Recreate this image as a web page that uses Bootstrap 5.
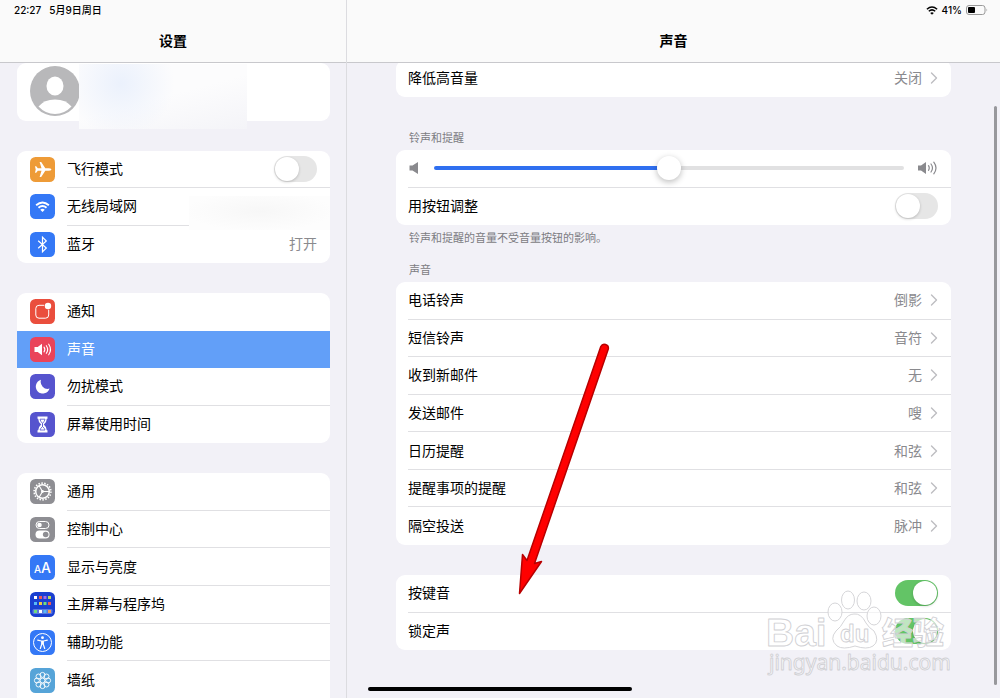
<!DOCTYPE html>
<html lang="zh-CN">
<head>
<meta charset="utf-8">
<meta name="viewport" content="width=device-width, initial-scale=1">
<title>设置 - 声音</title>
<link href="https://cdn.jsdelivr.net/npm/bootstrap@5.3.0/dist/css/bootstrap.min.css" rel="stylesheet">
<style>
  body { background: #f2f1f7; color: #000; font: 14px/20px Inter, "Noto Sans CJK SC", sans-serif; }
  a { color: inherit; text-decoration: none; }
  .sidebar { width: 347px; border-right: 1px solid #dcdce0; }
  .pane-head { height: 63px; background: #fafafa; border-bottom: 1px solid #c8c8cc; }
  .status { height: 20px; font-size: 10px; line-height: 20px; font-weight: 500; padding: 0 12px 0 14px; }
  .pane-title { font-size: 14px; line-height: 20px; font-weight: 600; padding-top: 11px; text-align: center; margin: 0; }
  .side-body { padding: 0 16px 0 17px; }
  .detail-body { padding: 0 49px; margin-top: -3px; }
  .clip { min-height: 0; }
  .group { background: #fff; border-radius: 9px; margin-bottom: 30px; display: flex; flex-direction: column; overflow: hidden; }
  .group.rows-2 { min-height: 75px; }
  .group.rows-3 { min-height: 112px; }
  .group.rows-4 { min-height: 150px; }
  .group.rows-6 { min-height: 226px; border-radius: 9px 9px 0 0; margin: 0; }
  .group.rows-7 { min-height: 263px; }
  .item { flex: 1 1 0; display: flex; align-items: stretch; padding-left: 12px; }
  .side-body .item { padding-left: 13px; gap: 12px; }
  .item-main { flex: 1; display: flex; align-items: center; justify-content: space-between; padding-right: 13px; border-bottom: 1px solid #e0e0e3; }
  .item:last-child .item-main, .no-line .item-main { border-color: transparent; }
  .rows-6 .item:last-child .item-main { border-color: #e0e0e3; }
  .item.current { background: #629ff8; color: #fff; }
  .value { color: #8a8a8e; }
  .glyph { width: 25px; height: 25px; align-self: center; flex: none; }
  .caption { color: #7c7c82; font-size: 11px; line-height: 16px; padding: 0 13px 4px; margin: 0; font-weight: 400; }
  .caption.first { padding-top: 33px; }
  .caption.note { padding-top: 5px; margin-bottom: 12px; }
  .chev { width: 8px; height: 12px; margin-left: 8px; }
  .switch { appearance: none; width: 43px; height: 26px; margin: 0; border-radius: 13px; background: #e6e6e6; position: relative; flex: none; display: block; }
  .switch::before { content: ""; position: absolute; left: 1px; top: 1px; width: 24px; height: 24px; border-radius: 50%; background: #fff; box-shadow: 0 1px 3px #0003; }
  .switch:checked { background: #63c466; }
  .switch:checked::before { left: 18px; }
  .volume { appearance: none; height: 26px; margin: 0 13px; background: none; min-width: 0; }
  .volume::-webkit-slider-runnable-track { height: 4px; border-radius: 2px; background: linear-gradient(90deg, #2f6ff0 50%, #e1e1e2 50%); }
  .volume::-webkit-slider-thumb { appearance: none; width: 24px; height: 24px; margin-top: -10px; border-radius: 50%; background: #fff; box-shadow: 0 2px 6px #0004; }
  .profile { min-height: 58px; padding: 3px 13px; overflow: visible; position: relative; }
  .smudge-name { position: absolute; left: 62px; top: 1px; width: 168px; height: 65px; background: radial-gradient(circle at 25% 30%, #ebf1fc 0, #f7f8fc00 40%), linear-gradient(165deg, #fcfcfd 50%, #f4f4f8); }
  .smudge-net { position: absolute; right: 0; top: 8px; width: 141px; height: 34px; z-index: 1; background: radial-gradient(ellipse at 50% 45%, #f7f7f7, #fdfdfd 75%); }
  .arrow { position: absolute; left: 166px; top: 340px; pointer-events: none; }
  .watermark { position: absolute; right: 50px; bottom: 18px; pointer-events: none; }
  .home-bar { position: absolute; left: 50%; bottom: 7px; width: 264px; margin-left: -132px; height: 4px; border-radius: 2px; background: #000; }
  .scroll-thumb { position: absolute; right: 3px; top: 106px; bottom: 13px; width: 3px; border-radius: 2px; background: #98989c; }
</style>
</head>
<body>
<svg class="d-none">
  <symbol id="chev" viewBox="0 0 8 12"><path d="M1.500 1L6.500 6L1.500 11" fill="none" stroke="#bdbdc1" stroke-width="1.400" stroke-linecap="round" stroke-linejoin="round"/></symbol>
  <symbol id="wifi" viewBox="0 0 16 12"><g fill="none" stroke="currentColor" stroke-width="2"><path d="M1.200 4.400Q8-1.600 14.800 4.400"/><path d="M3.700 7Q8 3.300 12.300 7"/></g><path d="M8 11.600L5.600 9.200Q8 7.300 10.400 9.200Z" fill="currentColor"/></symbol>
</svg>
<div class="d-flex vh-100 overflow-hidden position-relative">
  <aside class="sidebar d-flex flex-column flex-shrink-0">
    <header class="pane-head flex-shrink-0">
      <div class="status d-flex"><span>22:27</span><span class="ms-2">5月9日周日</span></div>
      <h1 class="pane-title">设置</h1>
    </header>
    <div class="clip flex-fill overflow-hidden">
    <nav class="side-body">
      <div class="group profile">
        <svg width="50" height="50" viewBox="0 0 50 50"><circle cx="25" cy="25" r="25" fill="#b8b8ba"/><ellipse cx="25" cy="20" rx="8.500" ry="9.500" fill="#fff"/><path d="M8.500 40.500Q14 33.500 25 33.500T41.500 40.500Q34.500 48 25 48T8.500 40.500Z" fill="#fff"/></svg>
        <div class="smudge-name"></div>
      </div>
      <div class="group rows-3">
        <div class="item">
          <svg class="glyph" viewBox="0 0 25 25"><rect width="25" height="25" rx="5.500" fill="#ee9b37"/><path d="M21.500 12.500Q21 11.200 18.500 11.200H15.300L11.200 5H9.600L11.500 11.200H7.800L6.200 9.200H5L5.700 12.500L5 15.800H6.200L7.800 13.800H11.500L9.600 20H11.200L15.300 13.800H18.500Q21 13.800 21.500 12.500Z" fill="#fff"/></svg>
          <div class="item-main"><label for="air">飞行模式</label><input class="switch" type="checkbox" role="switch" id="air"></div>
        </div>
        <a class="item position-relative" href="#wlan">
          <svg class="glyph text-white" viewBox="0 0 25 25"><rect width="25" height="25" rx="5.500" fill="#3478f6"/><use href="#wifi" x="5" y="7" width="15" height="11.500"/></svg>
          <div class="item-main">无线局域网</div><div class="smudge-net"></div>
        </a>
        <a class="item" href="#bluetooth">
          <svg class="glyph" viewBox="0 0 25 25"><rect width="25" height="25" rx="5.500" fill="#3478f6"/><path d="M8.200 8.700L16.300 16L12.500 19.800V5.200L16.300 9L8.200 16.300" fill="none" stroke="#fff" stroke-width="1.200"/></svg>
          <div class="item-main">蓝牙<span class="value">打开</span></div>
        </a>
      </div>
      <div class="group rows-4">
        <a class="item no-line" href="#notice">
          <svg class="glyph" viewBox="0 0 25 25"><rect width="25" height="25" rx="5.500" fill="#ea4e3d"/><path d="M14.300 6.300H9Q5.800 6.300 5.800 9.500V16Q5.800 19.200 9 19.200H15.500Q18.700 19.200 18.700 16V10.700" fill="none" stroke="#fff" stroke-width="1"/><circle cx="18" cy="7" r="3.200" fill="#fff"/></svg>
          <div class="item-main">通知</div>
        </a>
        <a class="item no-line current" href="#sound" aria-current="page">
          <svg class="glyph" viewBox="0 0 25 25"><rect width="25" height="25" rx="5.500" fill="#ea445a"/><path d="M4.500 10H7.700L12 6.800V18.200L7.700 15H4.500Z" fill="#fff"/><path d="M14 10.200Q15.700 12.500 14 14.800M16.300 8.700Q19 12.500 16.300 16.300M18.700 7.200Q22.300 12.500 18.700 17.800" fill="none" stroke="#fff" stroke-width="1.100" stroke-linecap="round"/></svg>
          <div class="item-main">声音</div>
        </a>
        <a class="item" href="#quiet">
          <svg class="glyph" viewBox="0 0 25 25"><rect width="25" height="25" rx="5.500" fill="#5654ce"/><path d="M11 5.800A7 7 0 1 0 19.500 14.600A7 7 0 0 1 11 5.800Z" fill="#fff"/></svg>
          <div class="item-main">勿扰模式</div>
        </a>
        <a class="item" href="#time">
          <svg class="glyph" viewBox="0 0 25 25"><rect width="25" height="25" rx="5.500" fill="#5654ce"/><path d="M7.500 4.500H17.500V6.700H16.800Q16.800 10 13.800 12.500Q16.800 15 16.800 18.300H17.500V20.500H7.500V18.300H8.200Q8.200 15 11.200 12.500Q8.200 10 8.200 6.700H7.500Z" fill="#fff"/><path d="M10 7.200H15Q14.800 9 12.500 11.500V14.500Q14.500 16 15 18H10Q10.500 16 12.500 14.500V11.500Q10.200 9 10 7.200Z" fill="none" stroke="#5654ce" stroke-width=".8"/></svg>
          <div class="item-main">屏幕使用时间</div>
        </a>
      </div>
      <div class="group rows-6">
        <a class="item" href="#general">
          <svg class="glyph" viewBox="0 0 25 25"><rect width="25" height="25" rx="5.500" fill="#8e8e93"/><g fill="none" stroke="#fff"><circle cx="12.500" cy="12.500" r="8.400" stroke-width="1.600" stroke-dasharray="1.500 1.432"/><circle cx="12.500" cy="12.500" r="6.800" stroke-width="1.500"/><path d="M12.500 12.500H19M12.500 12.500L9.300 7M12.500 12.500L9.300 18" stroke-width="1.100"/></g><circle cx="12.500" cy="12.500" r="1.400" fill="#fff"/></svg>
          <div class="item-main">通用</div>
        </a>
        <a class="item" href="#control">
          <svg class="glyph" viewBox="0 0 25 25"><rect width="25" height="25" rx="5.500" fill="#8e8e93"/><rect x="6" y="4.500" width="13" height="7" rx="3.500" fill="none" stroke="#fff"/><circle cx="9.500" cy="8" r="2.300" fill="#fff"/><rect x="5.500" y="13.500" width="14" height="8" rx="4" fill="#fff"/><circle cx="15.700" cy="17.500" r="2.800" fill="#8e8e93"/></svg>
          <div class="item-main">控制中心</div>
        </a>
        <a class="item" href="#display">
          <svg class="glyph" viewBox="0 0 25 25"><rect width="25" height="25" rx="5.500" fill="#3478f6"/><g fill="#fff" font-family="Inter" font-weight="500"><text x="4" y="18" font-size="10">A</text><text x="11" y="18" font-size="14">A</text></g></svg>
          <div class="item-main">显示与亮度</div>
        </a>
        <a class="item" href="#home">
          <svg class="glyph" viewBox="0 0 25 25"><rect width="25" height="25" rx="5.500" fill="#1b3fd0"/><rect x="2.500" y="17" width="20" height="5" rx="1.500" fill="#5a78e0"/><g><path fill="#fff" d="M4 4h3v3H4zM9 18h3v3H9z"/><path fill="#ee5a52" d="M9 4h3v3H9zM18 10h3v3h-3z"/><path fill="#a76bea" d="M13.500 4h3v3h-3z"/><path fill="#b8d95a" d="M18 4h3v3h-3z"/><path fill="#58b8f8" d="M4 10h3v3H4zM13.500 18h3v3h-3z"/><path fill="#f5c542" d="M9 10h3v3H9z"/><path fill="#6fdc7c" d="M13.500 10h3v3h-3zM4 18h3v3H4z"/><path fill="#f2a057" d="M18 18h3v3h-3z"/></g></svg>
          <div class="item-main">主屏幕与程序坞</div>
        </a>
        <a class="item" href="#access">
          <svg class="glyph" viewBox="0 0 25 25"><rect width="25" height="25" rx="5.500" fill="#3478f6"/><circle cx="12.500" cy="12.500" r="9" fill="none" stroke="#fff"/><circle cx="12.500" cy="7.700" r="1.400" fill="#fff"/><path d="M7.700 10.200L11.300 11H13.700L17.300 10.200M12.500 11V14M11.700 11V14.500L10.300 18.500M13.300 11V14.500L14.700 18.500" fill="none" stroke="#fff" stroke-width="1.200" stroke-linecap="round"/></svg>
          <div class="item-main">辅助功能</div>
        </a>
        <a class="item" href="#wallpaper">
          <svg class="glyph" viewBox="0 0 25 25"><rect width="25" height="25" rx="5.500" fill="#56a4d8"/><g fill="none" stroke="#fff" stroke-width=".9"><circle cx="12.500" cy="12.500" r="2.400"/><circle cx="12.500" cy="6.900" r="2.500"/><circle cx="16.500" cy="8.500" r="2.500"/><circle cx="18.100" cy="12.500" r="2.500"/><circle cx="16.500" cy="16.500" r="2.500"/><circle cx="12.500" cy="18.100" r="2.500"/><circle cx="8.500" cy="16.500" r="2.500"/><circle cx="6.900" cy="12.500" r="2.500"/><circle cx="8.500" cy="8.500" r="2.500"/></g></svg>
          <div class="item-main">墙纸</div>
        </a>
      </div>
    </nav>
    </div>
  </aside>

  <main class="d-flex flex-column flex-fill position-relative">
    <header class="pane-head flex-shrink-0">
      <div class="status d-flex justify-content-end align-items-center">
        <svg width="12" height="9"><use href="#wifi"/></svg><span class="ms-1">41%</span>
        <svg class="ms-1" width="22" height="10" viewBox="0 0 22 10"><rect x=".5" y=".5" width="18.500" height="9" rx="2.500" fill="none" stroke="#999"/><rect x="2" y="2" width="7" height="6" rx="1" fill="#000"/><path d="M20.500 3.500Q22 5 20.500 6.500Z" fill="#999"/></svg>
      </div>
      <h2 class="pane-title">声音</h2>
    </header>
    <div class="clip flex-fill overflow-hidden">
    <div class="detail-body">
      <div class="group mb-0">
        <a class="item" href="#limit"><div class="item-main py-2">降低高音量<span class="value ms-auto">关闭</span><svg class="chev"><use href="#chev"/></svg></div></a>
      </div>
      <h3 class="caption first">铃声和提醒</h3>
      <div class="group rows-2 mb-0">
        <div class="item"><div class="item-main">
          <svg width="13" height="14" viewBox="0 0 13 14"><path d="M1.500 4.500H4.500L10 1V13L4.500 9.500H1.500Z" fill="#8a8a8e"/></svg>
          <input class="volume flex-fill" type="range" min="0" max="100" value="50" aria-label="铃声和提醒音量">
          <svg width="21" height="14" viewBox="0 0 21 14"><path d="M1 4.500H4L9 1V13L4 9.500H1Z" fill="#8a8a8e"/><path d="M11.500 4.700Q13 7 11.500 9.300M14 3Q17 7 14 11M16.800 1.200Q21.200 7 16.800 12.800" fill="none" stroke="#8a8a8e" stroke-width="1.200" stroke-linecap="round"/></svg>
        </div></div>
        <div class="item"><div class="item-main"><label for="keys">用按钮调整</label><input class="switch" type="checkbox" role="switch" id="keys"></div></div>
      </div>
      <p class="caption note">铃声和提醒的音量不受音量按钮的影响。</p>
      <h3 class="caption">声音</h3>
      <div class="group rows-7">
        <a class="item" href="#r1"><div class="item-main">电话铃声<span class="value ms-auto">倒影</span><svg class="chev"><use href="#chev"/></svg></div></a>
        <a class="item" href="#r2"><div class="item-main">短信铃声<span class="value ms-auto">音符</span><svg class="chev"><use href="#chev"/></svg></div></a>
        <a class="item" href="#r3"><div class="item-main">收到新邮件<span class="value ms-auto">无</span><svg class="chev"><use href="#chev"/></svg></div></a>
        <a class="item" href="#r4"><div class="item-main">发送邮件<span class="value ms-auto">嗖</span><svg class="chev"><use href="#chev"/></svg></div></a>
        <a class="item" href="#r5"><div class="item-main">日历提醒<span class="value ms-auto">和弦</span><svg class="chev"><use href="#chev"/></svg></div></a>
        <a class="item" href="#r6"><div class="item-main">提醒事项的提醒<span class="value ms-auto">和弦</span><svg class="chev"><use href="#chev"/></svg></div></a>
        <a class="item" href="#r7"><div class="item-main">隔空投送<span class="value ms-auto">脉冲</span><svg class="chev"><use href="#chev"/></svg></div></a>
      </div>
      <div class="group rows-2">
        <div class="item"><div class="item-main"><label for="click">按键音</label><input class="switch" type="checkbox" role="switch" id="click" checked></div></div>
        <div class="item"><div class="item-main"><label for="lock">锁定声</label><input class="switch" type="checkbox" role="switch" id="lock" checked></div></div>
      </div>
    </div>
    </div>

    <svg class="arrow" width="100" height="262" viewBox="0 0 100 262"><path d="M87.800 6.500A4 4 0 0 1 95.300 9L21.500 223.500L28.500 221.500L6.500 253.500L9.500 214.500L14 220.500Z" fill="#f00" stroke="#b80000" stroke-width="1.500" stroke-linejoin="round"/></svg>

    <svg class="watermark" width="186" height="92" viewBox="0 0 186 92">
      <g fill="#fff" fill-opacity=".6" stroke="#d0d0d4" stroke-width=".9" stroke-linejoin="round">
        <ellipse cx="71" cy="24" rx="7" ry="9"/><ellipse cx="84" cy="12" rx="6.500" ry="9"/><ellipse cx="100" cy="13" rx="7" ry="9"/><ellipse cx="110" cy="28" rx="7" ry="9"/>
        <path d="M90 26Q97 25 102 35Q105 40 110 43Q116 53 109 58Q103 62 91 58Q79 62 73 58Q65 51 72 43Q77 39 80 33Q84 26 90 26Z"/>
        <text x="2" y="58" font-family="Liberation Sans" font-weight="700" font-size="39">Bai</text>
        <text x="76" y="54" font-family="Liberation Sans" font-weight="700" font-size="24">du</text>
        <text x="118" y="56" font-family="Noto Sans CJK SC" font-weight="900" font-size="31">经验</text>
        <text x="5" y="82" font-family="Noto Sans" font-weight="400" font-size="21">jingyan.baidu.com</text>
      </g>
    </svg>
    <div class="scroll-thumb"></div>
  </main>
  <div class="home-bar"></div>
</div>
<script src="https://cdn.jsdelivr.net/npm/bootstrap@5.3.0/dist/js/bootstrap.bundle.min.js"></script>
</body>
</html>
